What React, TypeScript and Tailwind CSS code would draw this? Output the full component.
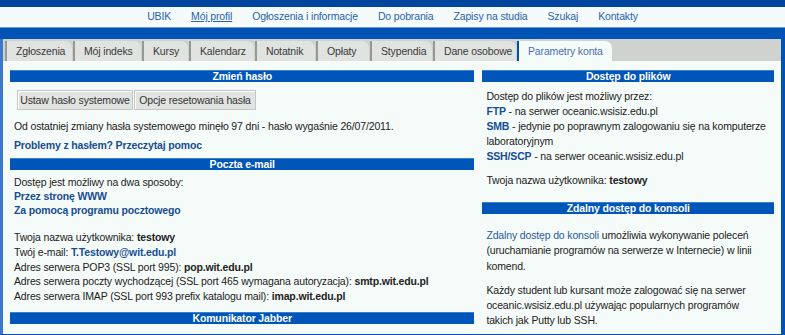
import React from 'react';

const navLinks = ['UBIK', 'Mój profil', 'Ogłoszenia i informacje', 'Do pobrania', 'Zapisy na studia', 'Szukaj', 'Kontakty'];
const tabs = [
  { label: 'Zgłoszenia', w: 'w-[67px]' },
  { label: 'Mój indeks', w: 'w-[68px]' },
  { label: 'Kursy', w: 'w-[46px]' },
  { label: 'Kalendarz', w: 'w-[65px]' },
  { label: 'Notatnik', w: 'w-[60px]' },
  { label: 'Opłaty', w: 'w-[53px]' },
  { label: 'Stypendia', w: 'w-[62px]' },
  { label: 'Dane osobowe', w: 'w-[83px]' },
];

const SectionHeader = ({ title }: { title: string }) => (
  <div className="h-[12px] bg-[#0055b8] border-t border-[#3b7fd4] text-white font-bold leading-[11px] text-center">
    {title}
  </div>
);

const Button = ({ label, w }: { label: string; w: string }) => (
  <div className={`${w} h-[20px] text-center bg-[#e2e4e2] border border-[#c4c7c4] shadow-[inset_1px_1px_0_#ffffff] text-[#333] leading-[18px]`}>
    {label}
  </div>
);

export default function App() {
  return (
    <div className="w-[785px] h-[335px] overflow-hidden bg-[#0052b4] text-[10.5px] tracking-[-0.15px] text-[#222] font-['Liberation_Sans',Arial,sans-serif]">
      <div className="h-[7px] bg-[#00469e]" />
      <nav className="h-[21px] bg-[#f4fbfa] flex justify-center items-center gap-[20px] border-b border-[#6a9ad8]">
        {navLinks.map((l) => (
          <span key={l} className={`text-[#2a62b0] ${l === 'Mój profil' ? 'underline' : ''}`}>{l}</span>
        ))}
      </nav>
      <div className="h-[11px] bg-[#0052b4]" />

      <div className="border-l-[3px] border-l-[#3a78cc] border-r-[4px] border-r-[#0052b4] h-[295px]">
        <div className="h-[22px] bg-[#cfd2cf] pt-[2px] pl-[2px] flex gap-[1px]">
          {tabs.map((t) => (
            <div key={t.label} className={`${t.w} h-[20px] bg-[#e1e3e1] border-l-2 border-[#979997] rounded-tr-[7px] pl-[9px] leading-[20px] text-[#3a3a3a]`}>
              {t.label}
            </div>
          ))}
          <div className="w-[95px] h-[20px] bg-[#f5fbf9] border-l-2 border-[#0050b0] rounded-tr-[7px] pl-[9px] leading-[20px] text-[#4a6fb4]">
            Parametry konta
          </div>
        </div>

        <div className="bg-[#f5fbf9] h-[273px] flex gap-[8px] px-[7px] pt-[9px]">
          <div className="w-[465px]">
            <SectionHeader title="Zmień hasło" />
            <div className="flex gap-[1px] mt-[8px] ml-[7px]">
              <Button label="Ustaw hasło systemowe" w="w-[116px]" />
              <Button label="Opcje resetowania hasła" w="w-[122px]" />
            </div>
            <p className="px-[4px] mt-[9px] leading-[15px]">
              Od ostatniej zmiany hasła systemowego minęło 97 dni - hasło wygaśnie 26/07/2011.
            </p>
            <p className="px-[4px] mt-[4px] leading-[15px] font-bold text-[#164d94]">Problemy z hasłem? Przeczytaj pomoc</p>

            <div className="mt-[5px]">
              <SectionHeader title="Poczta e-mail" />
            </div>
            <div className="px-[4px] mt-[5px] leading-[14px]">
              <div>Dostęp jest możliwy na dwa sposoby:</div>
              <div className="font-bold text-[#164d94]">Przez stronę WWW</div>
              <div className="font-bold text-[#164d94]">Za pomocą programu pocztowego</div>
            </div>
            <div className="px-[4px] mt-[13px] leading-[14.75px]">
              <div>Twoja nazwa użytkownika: <b>testowy</b></div>
              <div>Twój e-mail: <b className="text-[#164d94]">T.Testowy@wit.edu.pl</b></div>
              <div>Adres serwera POP3 (SSL port 995): <b>pop.wit.edu.pl</b></div>
              <div>Adres serwera poczty wychodzącej (SSL port 465 wymagana autoryzacja): <b>smtp.wit.edu.pl</b></div>
              <div>Adres serwera IMAP (SSL port 993 prefix katalogu mail): <b>imap.wit.edu.pl</b></div>
            </div>
            <div className="mt-[8px]">
              <SectionHeader title="Komunikator Jabber" />
            </div>
          </div>

          <div className="w-[292px]">
            <SectionHeader title="Dostęp do plików" />
            <div className="px-[4px] mt-[7px] leading-[15px] whitespace-nowrap">
              <div>Dostęp do plików jest możliwy przez:</div>
              <div><b className="text-[#164d94]">FTP</b> - na serwer oceanic.wsisiz.edu.pl</div>
              <div><b className="text-[#164d94]">SMB</b> - jedynie po poprawnym zalogowaniu się na komputerze<br />laboratoryjnym</div>
              <div><b className="text-[#164d94]">SSH/SCP</b> - na serwer oceanic.wsisiz.edu.pl</div>
            </div>
            <p className="px-[4px] mt-[9px] leading-[15px]">Twoja nazwa użytkownika: <b>testowy</b></p>

            <div className="mt-[14px]">
              <SectionHeader title="Zdalny dostęp do konsoli" />
            </div>
            <p className="px-[4px] mt-[14px] leading-[15.3px] whitespace-nowrap">
              <span className="text-[#2a5aa0]">Zdalny dostęp do konsoli</span> umożliwia wykonywanie poleceń<br />
              (uruchamianie programów na serwerze w Internecie) w linii<br />
              komend.
            </p>
            <p className="px-[4px] mt-[9px] leading-[15.3px] whitespace-nowrap">
              Każdy student lub kursant może zalogować się na serwer<br />
              oceanic.wsisiz.edu.pl używając popularnych programów<br />
              takich jak Putty lub SSH.
            </p>
          </div>
        </div>
      </div>
    </div>
  );
}
